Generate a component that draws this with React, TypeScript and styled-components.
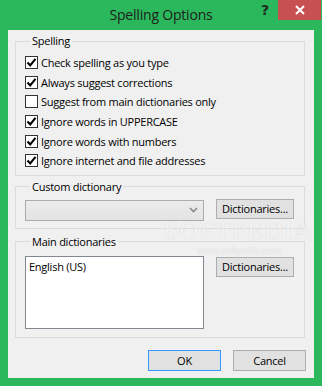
import React from 'react';
import styled, { createGlobalStyle } from 'styled-components';

const GlobalStyle = createGlobalStyle`
  html, body {
    margin: 0;
    padding: 0;
    background: #ffffff;
  }
  body {
    font-family: "Open Sans", "Noto Sans", sans-serif;
  }
`;

const options = [
  { label: 'Check spelling as you type', checked: true },
  { label: 'Always suggest corrections', checked: true },
  { label: 'Suggest from main dictionaries only', checked: false },
  { label: 'Ignore words in UPPERCASE', checked: true },
  { label: 'Ignore words with numbers', checked: true },
  { label: 'Ignore internet and file addresses', checked: true },
];

function CheckBox({ checked }: { checked: boolean }) {
  return (
    <Box>
      {checked && (
        <svg width="11" height="11" viewBox="0 0 11 11">
          <path d="M1.5 5.5 L4.2 8.3 L9.5 1.8" fill="none" stroke="#000" strokeWidth="2.1" />
        </svg>
      )}
    </Box>
  );
}

function App() {
  return (
    <>
      <GlobalStyle />
      <Window>
        <TitleBar>
          <Title>Spelling Options</Title>
          <HelpButton>?</HelpButton>
          <CloseButton>
            <svg width="10" height="10" viewBox="0 0 10 10">
              <path d="M1 1 L9 9 M9 1 L1 9" stroke="#fff" strokeWidth="2" />
            </svg>
          </CloseButton>
        </TitleBar>
        <Client>
          <Group $gap={0} $top={5} $bottom={4}>
            <Legend>Spelling</Legend>
            {options.map(o => (
              <CheckRow key={o.label}>
                <CheckBox checked={o.checked} />
                <span>{o.label}</span>
              </CheckRow>
            ))}
          </Group>

          <Group $gap={4} $top={6} $bottom={7}>
            <Legend>Custom dictionary</Legend>
            <DictRow>
              <Combo>
                <svg width="9" height="6" viewBox="0 0 9 6">
                  <path d="M1 1 L4.5 4.5 L8 1" fill="none" stroke="#8a8a8a" strokeWidth="1.6" />
                </svg>
              </Combo>
              <Button $top={-1}>Dictionaries...</Button>
            </DictRow>
          </Group>

          <Group $gap={6} $top={7} $bottom={8}>
            <Legend>Main dictionaries</Legend>
            <DictRow>
              <ListBox>
                <ListItem>English (US)</ListItem>
              </ListBox>
              <Button $top={1}>Dictionaries...</Button>
            </DictRow>
          </Group>

          <Footer>
            <FooterButton $primary>OK</FooterButton>
            <FooterButton>Cancel</FooterButton>
          </Footer>

          <Watermark>
            <Big>SOFTPEDIA</Big>
            <Small>www.softpedia.com</Small>
          </Watermark>
        </Client>
      </Window>
    </>
  );
}

const Window = styled.div`
  width: 322px;
  height: 386px;
  box-sizing: border-box;
  background: #2bb75b;
  padding: 0 8px 8px 8px;
  display: flex;
  flex-direction: column;
`;

const TitleBar = styled.div`
  height: 30px;
  flex: none;
  display: flex;
  align-items: flex-start;
  position: relative;
  margin-right: -7px;
`;

const Title = styled.div`
  position: absolute;
  left: 0;
  right: 7px;
  top: 5px;
  text-align: center;
  font-family: "Open Sans", "Noto Sans", sans-serif;
  font-size: 14px;
  letter-spacing: -0.2px;
  color: #1e1e1e;
  line-height: 20px;
`;

const HelpButton = styled.div`
  margin-left: auto;
  width: 26px;
  height: 20px;
  line-height: 20px;
  text-align: center;
  font-family: "DejaVu Sans", sans-serif;
  font-weight: bold;
  font-size: 14px;
  color: #1f2a22;
`;

const CloseButton = styled.div`
  width: 43px;
  height: 20px;
  background: #c75050;
  display: flex;
  align-items: center;
  justify-content: center;
`;

const Client = styled.div`
  flex: 1;
  background: #f0f0f0;
  padding: 4px 8px 0 7px;
  display: flex;
  flex-direction: column;
  position: relative;
  font-size: 11px;
  letter-spacing: -0.25px;
  color: #000;
`;

const Group = styled.fieldset<{ $gap: number; $top: number; $bottom: number }>`
  margin: ${p => p.$gap}px 1px 0 0;
  border: 1px solid #dcdcdc;
  padding: ${p => p.$top}px 0 ${p => p.$bottom}px 9px;
  min-width: 0;
`;

const Legend = styled.legend`
  margin-left: 5px;
  padding: 0 2px;
  line-height: 14px;
`;

const CheckRow = styled.div`
  height: 19.6px;
  display: flex;
  align-items: center;
  gap: 3px;
  white-space: nowrap;
`;

const Box = styled.div`
  width: 11px;
  height: 11px;
  border: 1px solid #333;
  background: #fff;
  display: flex;
  align-items: center;
  justify-content: center;
  flex: none;
`;

const DictRow = styled.div`
  display: flex;
  align-items: flex-start;
  gap: 12px;
`;

const Combo = styled.div`
  width: 179px;
  height: 21px;
  box-sizing: border-box;
  border: 1px solid #acacac;
  background: linear-gradient(#ececec, #e3e3e3);
  display: flex;
  align-items: center;
  justify-content: flex-end;
  padding-right: 5px;
`;

const Button = styled.div<{ $top: number }>`
  margin-top: ${p => p.$top}px;
  width: 78px;
  height: 20px;
  box-sizing: border-box;
  border: 1px solid #adadad;
  background: #e1e1e1;
  display: flex;
  align-items: center;
  justify-content: center;
  white-space: nowrap;
`;

const ListBox = styled.div`
  width: 179px;
  height: 73px;
  box-sizing: border-box;
  border: 1px solid #828790;
  background: #fff;
  padding: 2px 3px;
`;

const ListItem = styled.div`
  line-height: 15px;
`;

const Footer = styled.div`
  display: flex;
  justify-content: flex-end;
  gap: 12px;
  margin-top: 12px;
`;

const FooterButton = styled.div<{ $primary?: boolean }>`
  width: 73px;
  height: 21px;
  box-sizing: border-box;
  border: 1px solid ${p => (p.$primary ? '#3399ff' : '#adadad')};
  background: #e1e1e1;
  display: flex;
  align-items: center;
  justify-content: center;
`;

const Watermark = styled.div`
  position: absolute;
  left: 156px;
  top: 190px;
  pointer-events: none;
  display: flex;
  flex-direction: column;
  align-items: center;
  opacity: 0.5;
`;

const Big = styled.div`
  font-family: "Liberation Serif", serif;
  font-size: 26px;
  line-height: 22px;
  letter-spacing: 1px;
  color: #f4f4f4;
  text-shadow: 0 0 1px #b8b8b8;
`;

const Small = styled.div`
  margin-top: 2px;
  font-family: "Liberation Serif", serif;
  font-size: 11px;
  line-height: 13px;
  color: #f4f4f4;
  text-shadow: 0 0 1px #b0b0b0;
`;

export default App;
